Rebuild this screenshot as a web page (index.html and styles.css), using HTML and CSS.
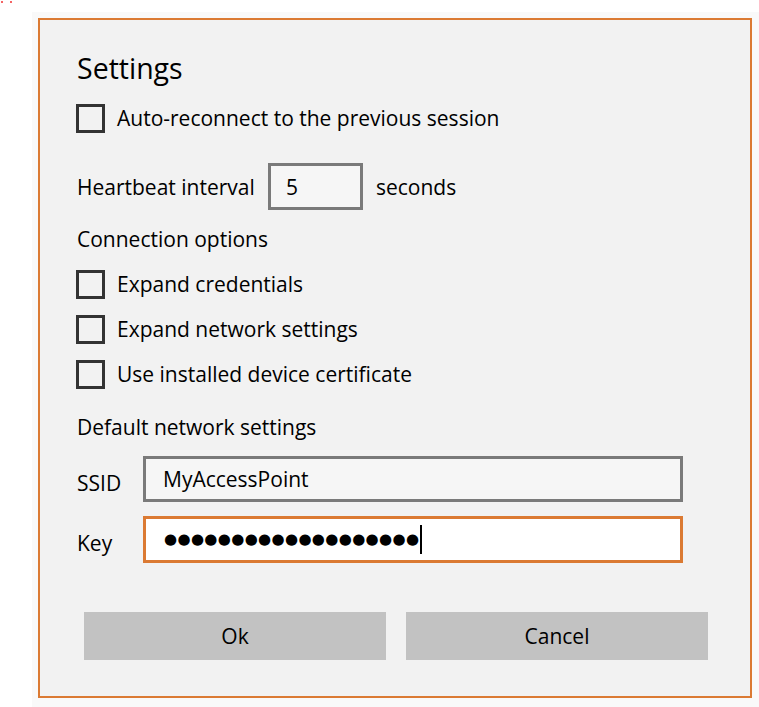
FILE: index.html
```html
<!DOCTYPE html>
<html lang="en">
<head>
<meta charset="utf-8">
<title>Settings</title>
<link rel="stylesheet" href="styles.css">
</head>
<body>
<div class="marks"><span class="mark"></span><span class="mark"></span></div>
<div class="stage">
  <div class="dialog">
    <h1 class="title">Settings</h1>
    <div class="check first"><span class="box"></span><span class="check-text">Auto-reconnect to the previous session</span></div>
    <div class="heartbeat">
      <span class="hb-label">Heartbeat interval</span>
      <div class="field small">5</div>
      <span class="hb-unit">seconds</span>
    </div>
    <div class="section conn">Connection options</div>
    <div class="checks">
      <div class="check"><span class="box"></span><span class="check-text">Expand credentials</span></div>
      <div class="check"><span class="box"></span><span class="check-text">Expand network settings</span></div>
      <div class="check"><span class="box"></span><span class="check-text">Use installed device certificate</span></div>
    </div>
    <div class="section net-title">Default network settings</div>
    <div class="net">
      <div class="net-row ssid"><span class="net-label">SSID</span><div class="field wide">MyAccessPoint</div></div>
      <div class="net-row key"><span class="net-label">Key</span><div class="field wide focused"><span class="dots">●●●●●●●●●●●●●●●●●●●</span><span class="caret"></span></div></div>
    </div>
    <div class="actions">
      <button class="btn">Ok</button>
      <button class="btn">Cancel</button>
    </div>
  </div>
</div>
</body>
</html>
```
FILE: styles.css
```css
html, body {
  margin: 0;
  background: #ffffff;
}
body {
  font-family: "Open Sans", "Noto Sans", sans-serif;
  font-size: 21px;
  color: #000;
  position: relative;
}
.marks {
  position: absolute;
  left: 1px;
  top: 1px;
  display: flex;
  gap: 7px;
}
.mark {
  width: 2px;
  height: 2px;
  background: #f03030;
  border-radius: 1px;
}
.stage {
  margin: 12px 0 0 32px;
  padding: 6px 7px 9px 6px;
  background: #f9f9f9;
}
.dialog {
  box-sizing: border-box;
  height: 680px;
  border: 2px solid #db7a33;
  background: #f2f2f2;
  padding: 28px 0 0 37px;
  display: flex;
  flex-direction: column;
}
.title {
  margin: 0;
  height: 40px;
  line-height: 40px;
  font-size: 28.5px;
  font-weight: 400;
}
.check {
  height: 30px;
  display: flex;
  align-items: center;
  gap: 12px;
  margin-left: -1px;
}
.check.first {
  margin-top: 15px;
}
.box {
  box-sizing: border-box;
  width: 29px;
  height: 29px;
  border: 3px solid #333333;
}
.heartbeat {
  margin-top: 30px;
  height: 47px;
  display: flex;
  align-items: center;
}
.hb-label {
  width: 191px;
}
.field {
  box-sizing: border-box;
  border: 3px solid #7a7a7a;
  background: #f6f6f6;
  display: flex;
  align-items: center;
}
.field.small {
  width: 95px;
  height: 47px;
  padding-left: 15px;
}
.hb-unit {
  margin-left: 13px;
}
.section {
  height: 26px;
  line-height: 26px;
}
.conn {
  margin-top: 16px;
}
.checks {
  margin-top: 17px;
  display: flex;
  flex-direction: column;
  gap: 15px;
}
.net-title {
  margin-top: 25px;
}
.net {
  margin-top: 16px;
  display: flex;
  flex-direction: column;
  gap: 14px;
}
.net-row {
  display: flex;
  align-items: center;
}
.net-label {
  width: 66px;
  padding-top: 7px;
}
.field.wide {
  width: 540px;
  padding-left: 17px;
}
.ssid .field {
  height: 46px;
}
.key .field {
  height: 47px;
}
.field.focused {
  border-color: #db7a33;
  background: #ffffff;
  padding-left: 18px;
}
.dots {
  font-family: "DejaVu Sans", sans-serif;
  font-size: 15px;
  letter-spacing: 0.35px;
  line-height: 1;
}
.caret {
  width: 2px;
  height: 29px;
  background: #000;
  margin-left: 1px;
}
.actions {
  margin-top: 49px;
  padding-left: 7px;
  display: flex;
  gap: 20px;
}
.btn {
  width: 302px;
  height: 48px;
  border: none;
  background: #c2c2c2;
  font-family: inherit;
  font-size: 21px;
  color: #000;
  padding: 0;
}
```
